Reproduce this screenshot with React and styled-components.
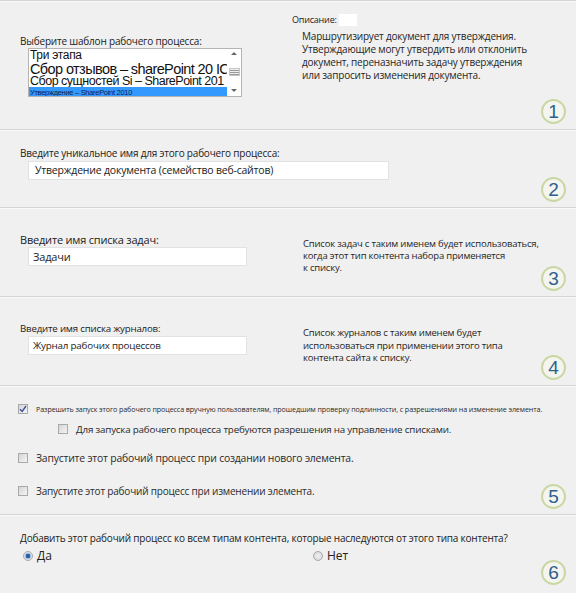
import React from "react";
import styled, { createGlobalStyle } from "styled-components";

const Global = createGlobalStyle`
  html, body { margin: 0; padding: 0; background: #f0f0f0; }
  body { font-family: "Open Sans", "Noto Sans", sans-serif; color: #222; }
`;

const Page = styled.div`
  width: 576px;
  height: 593px;
  display: flex;
  flex-direction: column;
  background: #f0f0f0;
  overflow: hidden;
`;

const Section = styled.section`
  position: relative;
  box-sizing: border-box;
  height: ${(p) => p.$h}px;
  flex: none;
  border-top: 1px solid #d4d4d4;
  box-shadow: inset 0 1px 0 #fafafa;
  padding: ${(p) => p.$pad || "0"};
`;

const Badge = styled.div`
  position: absolute;
  right: 10px;
  bottom: 5px;
  width: 25px;
  height: 25px;
  box-sizing: border-box;
  border-radius: 50%;
  border: 2px solid #c9d7a4;
  background: #f3f5ee;
  color: #2f5f8f;
  font-family: "Liberation Sans", Arial, sans-serif;
  font-size: 19px;
  line-height: 21px;
  text-align: center;
`;

const TwoCol = styled.div`
  display: grid;
  grid-template-columns: ${(p) => p.$cols};
  align-items: start;
`;

const Label = styled.div`
  font-size: ${(p) => p.$size || 10}px;
  line-height: 13px;
  margin-top: ${(p) => p.$mt || 0}px;
  white-space: nowrap;
  letter-spacing: -0.2px;
`;

const Indent = styled.div`
  padding-left: 8px;
  margin-top: ${(p) => p.$mt || 0}px;
`;

const ListBox = styled.div`
  width: 214px;
  height: 49px;
  box-sizing: border-box;
  border: 1px solid #b4b4b4;
  background: #fff;
  display: flex;
  overflow: hidden;
`;

const ListItems = styled.div`
  flex: 1;
  min-width: 0;
  display: flex;
  flex-direction: column;
  overflow: hidden;
`;

const ListItem = styled.div`
  font-family: "Liberation Sans", Arial, sans-serif;
  font-size: ${(p) => p.$size}px;
  line-height: ${(p) => p.$lh}px;
  height: ${(p) => p.$lh}px;
  white-space: nowrap;
  padding-left: 1px;
  letter-spacing: ${(p) => p.$ls ?? -0.3}px;
  color: ${(p) => (p.$selected ? "#14224a" : "#111")};
  background: ${(p) => (p.$selected ? "#3399ff" : "transparent")};
`;

const ScrollBar = styled.div`
  width: 14px;
  flex: none;
  display: flex;
  flex-direction: column;
  align-items: center;
  justify-content: space-between;
  background: #fff;
  padding: 3px 0 4px;
  box-sizing: border-box;
`;

const Arrow = styled.div`
  width: 0;
  height: 0;
  border-left: 3px solid transparent;
  border-right: 3px solid transparent;
  ${(p) =>
    p.$up
      ? "border-bottom: 3px solid #666;"
      : "border-top: 3px solid #666;"}
`;

const Thumb = styled.div`
  width: 11px;
  height: 8px;
  border: 1px solid #c6c6c6;
  background: repeating-linear-gradient(#eee 0 1px, #999 1px 2px);
  box-sizing: border-box;
`;

const DescHead = styled.div`
  display: flex;
  align-items: center;
  gap: 2px;
  font-size: 9px;
  line-height: 12px;
  letter-spacing: -0.2px;
`;

const Blank = styled.span`
  display: inline-block;
  width: 18px;
  height: 12px;
  background: #fff;
`;

const Para = styled.div`
  font-size: ${(p) => p.$size || 10}px;
  line-height: ${(p) => p.$lh || 13}px;
  padding-left: ${(p) => p.$pl || 0}px;
  margin-top: ${(p) => p.$mt || 0}px;
  letter-spacing: -0.2px;
  color: #262626;
`;

const Field = styled.div`
  width: ${(p) => p.$w}px;
  height: 19px;
  box-sizing: border-box;
  background: #fff;
  border: 1px solid #e2e2e2;
  font-size: ${(p) => p.$size || 10.5}px;
  line-height: 17px;
  padding-left: ${(p) => p.$pl || 6}px;
  white-space: nowrap;
  letter-spacing: -0.2px;
  color: #222;
`;

const CheckRow = styled.label`
  display: flex;
  align-items: center;
  gap: ${(p) => p.$gap || 8}px;
  padding-left: ${(p) => p.$pl || 0}px;
  margin-top: ${(p) => p.$mt || 0}px;
  font-size: ${(p) => p.$size}px;
  height: 12px;
  white-space: nowrap;
  letter-spacing: ${(p) => p.$ls ?? -0.2}px;
  color: #2a2a2a;
`;

const Box = styled.span`
  width: 10px;
  height: 10px;
  flex: none;
  box-sizing: border-box;
  border: 1px solid #a9a9a9;
  background: linear-gradient(135deg, #d6d6d6, #f4f4f4);
  display: flex;
  align-items: center;
  justify-content: center;
`;

const RadioRow = styled.div`
  display: flex;
  margin-top: 4px;
`;

const RadioOpt = styled.label`
  display: flex;
  align-items: center;
  gap: 4px;
  width: ${(p) => p.$w || "auto"};
  padding-left: ${(p) => p.$pl || 0}px;
  font-size: 12px;
  line-height: 14px;
  color: #222;
`;

const Dot = styled.span`
  width: 10px;
  height: 10px;
  flex: none;
  box-sizing: border-box;
  border-radius: 50%;
  border: 1px solid #a8a8a8;
  background: ${(p) =>
    p.$on
      ? "radial-gradient(circle, #2b5fa8 0 2px, #9ab4d8 2.5px, #eef2f8 4px)"
      : "radial-gradient(circle, #f2f2f2, #d0d0d0)"};
`;

const Check = () => (
  <svg width="8" height="8" viewBox="0 0 8 8">
    <path d="M1 4.2 L3.2 6.5 L7 1" fill="none" stroke="#3c52a0" strokeWidth="1.4" />
  </svg>
);

export default function App() {
  return (
    <>
      <Global />
      <Page>
        <Section $h={129} $pad="13px 0 0 20px">
          <TwoCol $cols="272px 1fr">
            <div>
              <Label $mt={21}>Выберите шаблон рабочего процесса:</Label>
              <Indent>
                <ListBox>
                  <ListItems>
                    <ListItem $size={12} $lh={13}>Три этапа</ListItem>
                    <ListItem $size={14.5} $lh={14} $ls={-0.6}>
                      Сбор отзывов – sharePoint 20 IC
                    </ListItem>
                    <ListItem $size={12.5} $lh={11} $ls={-0.5}>
                      Сбор сущностей Si – SharePoint 201
                    </ListItem>
                    <ListItem $size={7.5} $lh={11} $selected>
                      Утверждение – SharePoint 2010
                    </ListItem>
                  </ListItems>
                  <ScrollBar>
                    <Arrow $up />
                    <Thumb />
                    <Arrow />
                  </ScrollBar>
                </ListBox>
              </Indent>
            </div>
            <div>
              <DescHead>
                Описание:<Blank />
              </DescHead>
              <Para $pl={10} $mt={4}>
                Маршрутизирует документ для утверждения.
                <br />
                Утверждающие могут утвердить или отклонить
                <br />
                документ, переназначить задачу утверждения
                <br />
                или запросить изменения документа.
              </Para>
            </div>
          </TwoCol>
          <Badge>1</Badge>
        </Section>

        <Section $h={78} $pad="17px 0 0 20px">
          <Label>Введите уникальное имя для этого рабочего процесса:</Label>
          <Indent $mt={1}>
            <Field $w={361}>Утверждение документа (семейство веб-сайтов)</Field>
          </Indent>
          <Badge>2</Badge>
        </Section>

        <Section $h={89} $pad="25px 0 0 20px">
          <TwoCol $cols="283px 1fr">
            <div>
              <Label $size={11}>Введите имя списка задач:</Label>
              <Indent $mt={1}>
                <Field $w={219} $pl={4} $size={11}>Задачи</Field>
              </Indent>
            </div>
            <Para $size={9.5} $lh={12} $mt={5}>
              Список задач с таким именем будет использоваться,
              <br />
              когда этот тип контента набора применяется
              <br />
              к списку.
            </Para>
          </TwoCol>
          <Badge>3</Badge>
        </Section>

        <Section $h={89} $pad="25px 0 0 20px">
          <TwoCol $cols="283px 1fr">
            <div>
              <Label $size={9.7}>Введите имя списка журналов:</Label>
              <Indent $mt={1}>
                <Field $w={219} $pl={4} $size={9.8}>Журнал рабочих процессов</Field>
              </Indent>
            </div>
            <Para $size={9.5} $lh={12.5} $mt={5}>
              Список журналов с таким именем будет
              <br />
              использоваться при применении этого типа
              <br />
              контента сайта к списку.
            </Para>
          </TwoCol>
          <Badge>4</Badge>
        </Section>

        <Section $h={129} $pad="17px 0 0 18px">
          <CheckRow $size={7.15} $ls={-0.1}>
            <Box>
              <Check />
            </Box>
            Разрешить запуск этого рабочего процесса вручную пользователям, прошедшим проверку подлинности, с разрешениями на изменение элемента.
          </CheckRow>
          <CheckRow $size={9.8} $pl={40} $mt={8}>
            <Box />
            Для запуска рабочего процесса требуются разрешения на управление списками.
          </CheckRow>
          <CheckRow $size={10.4} $mt={17}>
            <Box />
            Запустите этот рабочий процесс при создании нового элемента.
          </CheckRow>
          <CheckRow $size={10} $mt={21}>
            <Box />
            Запустите этот рабочий процесс при изменении элемента.
          </CheckRow>
          <Badge>5</Badge>
        </Section>

        <Section $h={76} $pad="17px 0 0 20px">
          <Label $size={10}>
            Добавить этот рабочий процесс ко всем типам контента, которые наследуются от этого типа контента?
          </Label>
          <RadioRow>
            <RadioOpt $w="290px" $pl={3}>
              <Dot $on />
              Да
            </RadioOpt>
            <RadioOpt>
              <Dot />
              Нет
            </RadioOpt>
          </RadioRow>
          <Badge>6</Badge>
        </Section>
      </Page>
    </>
  );
}
